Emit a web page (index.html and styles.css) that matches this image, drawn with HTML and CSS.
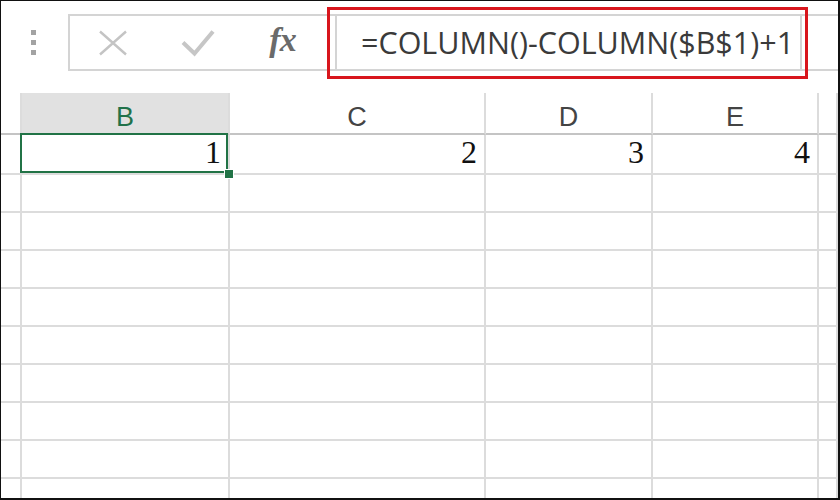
FILE: index.html
```html
<!DOCTYPE html>
<html>
<head>
<meta charset="utf-8">
<link rel="stylesheet" href="styles.css">
</head>
<body>
<div class="frame">
  <div class="toolbar">
    <div class="grip"><span></span><span></span><span></span></div>
    <div class="fbar">
      <div class="btns">
        <span class="btn"><svg width="30" height="26" viewBox="0 0 30 26"><path d="M2 1.5 L28 24.5 M28 1.5 L2 24.5" stroke="#c4c4c4" stroke-width="2.4" fill="none"/></svg></span>
        <span class="btn"><svg width="34" height="28" viewBox="0 0 34 28"><path d="M2 13.5 L13.5 24.5 L32 2.5" stroke="#c6c6c6" stroke-width="4" fill="none"/></svg></span>
        <span class="btn fx">fx</span>
      </div>
      <div class="input">=COLUMN()-COLUMN($B$1)+1</div>
      <div class="tail"></div>
    </div>
    <div class="highlight"></div>
  </div>
  <div class="sheet">
    <div class="c hd"></div><div class="c hd sel">B</div><div class="c hd">C</div><div class="c hd">D</div><div class="c hd">E</div><div class="c hd"></div>
    <div class="c"></div><div class="c num active">1</div><div class="c num">2</div><div class="c num">3</div><div class="c num">4</div><div class="c"></div>
    <div class="c"></div><div class="c"></div><div class="c"></div><div class="c"></div><div class="c"></div><div class="c"></div>
    <div class="c"></div><div class="c"></div><div class="c"></div><div class="c"></div><div class="c"></div><div class="c"></div>
    <div class="c"></div><div class="c"></div><div class="c"></div><div class="c"></div><div class="c"></div><div class="c"></div>
    <div class="c"></div><div class="c"></div><div class="c"></div><div class="c"></div><div class="c"></div><div class="c"></div>
    <div class="c"></div><div class="c"></div><div class="c"></div><div class="c"></div><div class="c"></div><div class="c"></div>
    <div class="c"></div><div class="c"></div><div class="c"></div><div class="c"></div><div class="c"></div><div class="c"></div>
    <div class="c"></div><div class="c"></div><div class="c"></div><div class="c"></div><div class="c"></div><div class="c"></div>
    <div class="c"></div><div class="c"></div><div class="c"></div><div class="c"></div><div class="c"></div><div class="c"></div>
    <div class="c"></div><div class="c"></div><div class="c"></div><div class="c"></div><div class="c"></div><div class="c"></div>
  </div>
</div>
</body>
</html>
```
FILE: styles.css
```css
* { box-sizing: border-box; }
html, body { margin: 0; padding: 0; background: #fff; }
.frame {
  width: 840px;
  height: 500px;
  border-style: solid;
  border-color: #111;
  border-width: 1px 2px 2px 1px;
  background: #fff;
  overflow: hidden;
  position: relative;
}
.toolbar {
  position: relative;
  height: 92px;
  display: flex;
  align-items: flex-start;
}
.grip {
  width: 67px;
  flex: none;
  padding: 29px 0 0 30px;
  display: flex;
  flex-direction: column;
  gap: 5px;
}
.grip span {
  width: 5px;
  height: 5px;
  background: #a3a3a3;
}
.fbar {
  flex: 1;
  margin-top: 13px;
  height: 57px;
  display: flex;
  border: 2px solid #d4d4d4;
  border-right: none;
}
.btns {
  width: 265px;
  flex: none;
  display: grid;
  grid-template-columns: 85px 85px 85px;
  align-items: center;
  justify-items: center;
}
.btn { display: flex; align-items: center; justify-content: center; }
.btn svg { display: block; }
.fx {
  font-family: "Liberation Serif", "DejaVu Serif", serif;
  font-style: italic;
  font-weight: bold;
  font-size: 34px;
  color: #6a6a6a;
  margin-top: -6px;
  letter-spacing: -1px;
}
.input {
  width: 467px;
  flex: none;
  border-left: 2px solid #d4d4d4;
  border-right: 2px solid #d4d4d4;
  padding-left: 24px;
  font-family: "Open Sans", "Liberation Sans", sans-serif;
  font-size: 30.5px;
  line-height: 53px;
  color: #3a3a3a;
  white-space: nowrap;
}
.tail { flex: 1; }
.highlight {
  position: absolute;
  left: 326px;
  top: 6px;
  width: 481px;
  height: 72px;
  border: 3px solid #d8161d;
}
.sheet {
  display: grid;
  grid-template-columns: 21px 208px 256px 167px 166px 1fr;
  grid-template-rows: 42px 40px repeat(9, 38px);
}
.c {
  border-right: 2px solid #dcdcdc;
  border-bottom: 2px solid #dcdcdc;
}
.hd {
  border-bottom-color: #c4c4c4;
  font-family: "Liberation Sans", Arial, sans-serif;
  font-size: 27px;
  color: #444;
  text-align: center;
  line-height: 40px;
  padding-top: 4px;
}
.hd.sel {
  background: #e1e1e1;
  color: #21724a;
}
.num {
  display: flex;
  justify-content: flex-end;
  align-items: flex-end;
  padding-right: 7px;
  padding-bottom: 5px;
  font-family: "Liberation Serif", "Times New Roman", serif;
  font-size: 32px;
  line-height: 32px;
  color: #111;
}
.active { position: relative; }
.active::after {
  content: "";
  position: absolute;
  left: -2px;
  top: -2px;
  right: 0;
  bottom: 0;
  border: 2.5px solid #217346;
}
.active::before {
  content: "";
  position: absolute;
  left: 203px;
  top: 35px;
  width: 8px;
  height: 8px;
  background: #217346;
  box-shadow: 0 0 0 1px #fff;
  z-index: 1;
}
```
